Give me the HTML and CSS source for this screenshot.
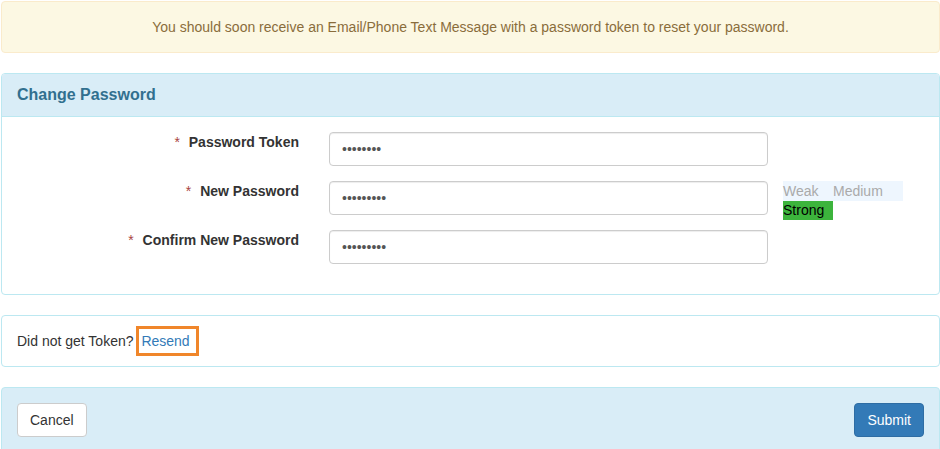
FILE: index.html
```html
<!DOCTYPE html>
<html lang="en">
<head>
  <meta charset="UTF-8">
  <meta name="viewport" content="width=device-width, initial-scale=1.0">
  <title>Change Password</title>
  <link rel="stylesheet" href="styles.css">
</head>
<body>
  <div class="page">
    <div class="alert">You should soon receive an Email/Phone Text Message with a password token to reset your password.</div>

    <div class="panel">
      <div class="panel-heading">Change Password</div>
      <form class="panel-body form">
        <div class="form-row">
          <label class="form-label"><span class="req">*</span> Password Token</label>
          <div class="form-field"><input class="input" type="password" value="12345678"></div>
        </div>
        <div class="form-row">
          <label class="form-label"><span class="req">*</span> New Password</label>
          <div class="form-field"><input class="input" type="password" value="123456789"></div>
          <div class="strength">
            <span class="level level-off weak">Weak</span>
            <span class="level level-off medium">Medium</span>
            <span class="level level-on">Strong</span>
          </div>
        </div>
        <div class="form-row">
          <label class="form-label"><span class="req">*</span> Confirm New Password</label>
          <div class="form-field"><input class="input" type="password" value="123456789"></div>
        </div>
      </form>
    </div>

    <div class="panel">
      <div class="panel-body resend-body">
        Did not get Token? <span class="resend-box"><a href="#" class="resend">Resend</a></span>
      </div>
    </div>

    <div class="panel panel-footer">
      <button class="btn" type="button">Cancel</button>
      <button class="btn btn-primary" type="submit">Submit</button>
    </div>
  </div>
</body>
</html>
```

FILE: styles.css
```css
body {
  margin: 0;
  font-family: "Liberation Sans", Arial, sans-serif;
  font-size: 14px;
  line-height: 20px;
  color: #333;
  background: #fff;
}

.page {
  padding: 1px 0 0 1px;
}

.alert {
  padding: 15px;
  margin-bottom: 20px;
  border: 1px solid #faebcc;
  border-radius: 4px;
  background-color: #fcf8e3;
  color: #8a6d3b;
  text-align: center;
}

.panel {
  margin-bottom: 20px;
  border: 1px solid #bce8f1;
  border-radius: 4px;
  background: #fff;
}

.panel-heading {
  padding: 10px 15px;
  line-height: 22px;
  font-size: 16px;
  font-weight: bold;
  color: #31708f;
  background-color: #d9edf7;
  border-bottom: 1px solid #bce8f1;
  border-radius: 3px 3px 0 0;
}

.panel-body {
  padding: 15px;
}

/* formulario */
.form {
  padding: 15px 0;
  margin: 0;
}

.form-row {
  display: grid;
  grid-template-columns: 312px 469px 1fr;
  grid-auto-rows: 34px;
  margin-bottom: 15px;
}

.form-label {
  padding-right: 15px;
  line-height: 21px;
  text-align: right;
  font-weight: bold;
}

.req {
  margin-right: 5px;
  color: #a94442;
  font-weight: normal;
}

.form-field {
  padding: 0 15px;
}

.input {
  display: block;
  box-sizing: border-box;
  width: 100%;
  height: 34px;
  padding: 6px 12px;
  font-family: "Liberation Sans", Arial, sans-serif;
  font-size: 14px;
  color: #555;
  border: 1px solid #ccc;
  border-radius: 4px;
  box-shadow: inset 0 1px 1px rgba(0, 0, 0, .075);
}

.strength {
  display: flex;
  flex-wrap: wrap;
  width: 120px;
  align-self: start;
}

.level {
  display: block;
  height: 19px;
  line-height: 19px;
}

.level-off {
  height: 20px;
  line-height: 20px;
  color: #aaa;
  background: #eef6fe;
}

.weak {
  width: 50px;
}

.medium {
  width: 70px;
}

.level-on {
  width: 50px;
  color: #000;
  background: #3cb43c;
}

/* reenviar */
.resend-body {
  height: 20px;
}

.resend-box {
  display: inline-block;
  padding: 2px 6px 2px 2px;
  margin: -5px 0 -5px -1px;
  border: 3px solid #f0862a;
  line-height: 20px;
}

.resend {
  color: #337ab7;
  text-decoration: none;
}

.panel-footer {
  display: flex;
  justify-content: space-between;
  padding: 15px;
  background-color: #d9edf7;
  min-height: 60px;
  margin-bottom: 0;
}

.btn {
  height: 34px;
  padding: 6px 12px;
  font-family: "Liberation Sans", Arial, sans-serif;
  font-size: 14px;
  line-height: 20px;
  color: #333;
  background: #fff;
  border: 1px solid #ccc;
  border-radius: 4px;
  cursor: pointer;
}

.btn-primary {
  color: #fff;
  background-color: #337ab7;
  border-color: #2e6da4;
}
```
